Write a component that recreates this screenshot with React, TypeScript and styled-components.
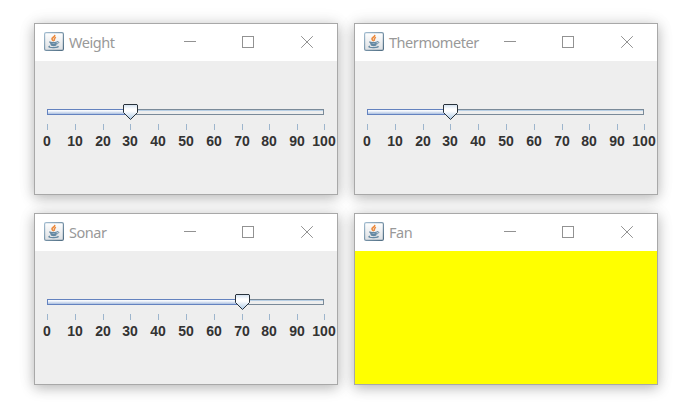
import React from "react";
import styled, { createGlobalStyle } from "styled-components";

const GlobalStyle = createGlobalStyle`
  * { box-sizing: border-box; }
  body { margin: 0; background: #fff; overflow: hidden; }
`;

const Desktop = styled.main`
  width: 690px;
  height: 416px;
  padding: 23px 0 0 34px;
  display: grid;
  grid-template-columns: 304px 304px;
  grid-template-rows: 172px 172px;
  gap: 18px 16px;
`;

const Frame = styled.section`
  display: flex;
  flex-direction: column;
  border: 1px solid #a8a8a8;
  background: #eee;
  box-shadow: 0 3px 12px rgba(0, 0, 0, 0.25), 0 0 18px rgba(0, 0, 0, 0.07);
`;

const TitleBar = styled.header`
  height: 37px;
  flex: none;
  display: flex;
  align-items: flex-start;
  padding: 8px 0 0 9px;
  background: #fff;
`;

const Title = styled.h1<{ $spacing: number }>`
  width: 120px;
  margin: 0;
  padding-left: 5px;
  font: 400 14.5px/20px "Noto Sans", "Open Sans", sans-serif;
  letter-spacing: ${(p) => p.$spacing}px;
  color: #999;
  white-space: nowrap;
`;

const Controls = styled.svg`
  width: 130px;
  height: 20px;
  flex: none;
`;

const Content = styled.div<{ $color: string }>`
  flex: 1;
  padding: 43px 0 0 12px;
  background: ${(p) => p.$color};
`;

const Track = styled.svg`
  display: block;
  width: 278px;
  height: 16px;
`;

const Scale = styled.div`
  display: grid;
  grid-template-columns: 28px 28px 27px 28px 28px 28px 28px 27px 28px 27px 1px;
  margin-top: 4px;
`;

const Mark = styled.div`
  width: 1px;
  display: flex;
  flex-direction: column;
  align-items: center;
`;

const Tick = styled.i`
  width: 1px;
  height: 6px;
  background: #9db5cd;
`;

const Label = styled.span`
  margin-top: 3px;
  margin-right: 1px;
  font: bold 14px/16px "Liberation Sans", Arial, sans-serif;
  color: #333;
`;

const IconSvg = styled.svg`
  width: 20px;
  height: 19px;
  flex: none;
`;

function JavaIcon() {
  return (
    <IconSvg viewBox="0 0 20 19">
      <defs>
        <linearGradient id="cupBg" x1="0" y1="0" x2="0" y2="1">
          <stop offset="0" stopColor="#fff" />
          <stop offset="1" stopColor="#dcdfe2" />
        </linearGradient>
        <linearGradient id="cupEdge" x1="0" y1="0" x2="1" y2="1">
          <stop offset="0" stopColor="#a3bdd0" />
          <stop offset="1" stopColor="#4f6d83" />
        </linearGradient>
      </defs>
      <rect x=".6" y=".6" width="18.8" height="17.8" rx="1.5" fill="url(#cupBg)" stroke="url(#cupEdge)" strokeWidth="1.2" />
      <g fill="none" strokeLinecap="round">
        <path d="M10.7 3.6C10.8 5 7.9 5.6 8 7C8.1 7.7 8.8 8 9.2 8.6" stroke="#ec8c40" strokeWidth="1.7" />
        <path d="M11.4 5.6C10 6.4 10.5 7.2 10.3 8.2" stroke="#ec8c40" strokeWidth="1.5" />
        <path d="M5.8 9.9C5.5 10.7 10.5 10.8 13 10" stroke="#6488a2" strokeWidth="1.3" />
        <path d="M13.4 9.6C15.8 9.4 15 11.6 12.9 11.9" stroke="#6488a2" strokeWidth="1" />
        <path d="M6.8 11.7C8.5 12.3 10.5 12.3 12.2 11.7M7.6 13C9 13.5 10.5 13.5 11.6 13" stroke="#6488a2" strokeWidth="1.6" />
        <path d="M5.4 14.2C3.8 15 6.2 15.7 9.8 15.6C13 15.5 14.8 15 14 14.4" stroke="#6488a2" strokeWidth="1.2" />
      </g>
    </IconSvg>
  );
}

function WindowControls() {
  return (
    <Controls viewBox="0 0 130 20" fill="none" stroke="#929292">
      <path d="M0 9.5H12" />
      <rect x="58.5" y="4.5" width="11" height="11" />
      <path d="M117.2 4.2L128.8 15.8M128.8 4.2L117.2 15.8" />
    </Controls>
  );
}

const tickOffsets = [0, 28, 56, 83, 111, 139, 167, 195, 222, 250, 277];

function Slider({ value }: { value: number }) {
  const x = tickOffsets[value / 10];
  return (
    <>
      <Track viewBox="0 0 278 16">
        <defs>
          <linearGradient id="fill" x1="0" y1="0" x2="0" y2="1">
            <stop offset="0" stopColor="#fff" />
            <stop offset=".3" stopColor="#f4f7fc" />
            <stop offset="1" stopColor="#9fb6dc" />
          </linearGradient>
          <linearGradient id="thumb" x1="0" y1="0" x2="0" y2="1">
            <stop offset="0" stopColor="#cfdff0" />
            <stop offset=".3" stopColor="#fff" />
            <stop offset=".45" stopColor="#fff" />
            <stop offset="1" stopColor="#a9c8e6" />
          </linearGradient>
        </defs>
        <rect x=".5" y="5.5" width="276" height="5" fill="#eee" stroke="#7a8a99" />
        <path d="M1 6.5H276" stroke="#b8cfe5" />
        <rect x=".5" y="5.5" width={x} height="5" fill="url(#fill)" stroke="#6382bf" />
        <path
          d={`M${x - 6} .5H${x + 7}L${x + 7.5} 1V8.5L${x + 0.5} 15.5L${x - 6.5} 8.5V1Z`}
          fill="url(#thumb)"
          stroke="#29323b"
        />
      </Track>
      <Scale>
        {tickOffsets.map((_, i) => (
          <Mark key={i}>
            <Tick />
            <Label>{i * 10}</Label>
          </Mark>
        ))}
      </Scale>
    </>
  );
}

interface WindowProps {
  title: string;
  spacing: number;
  value?: number;
}

function AppWindow({ title, spacing, value }: WindowProps) {
  return (
    <Frame>
      <TitleBar>
        <JavaIcon />
        <Title $spacing={spacing}>{title}</Title>
        <WindowControls />
      </TitleBar>
      <Content $color={value === undefined ? "#ff0" : "#eee"}>
        {value !== undefined && <Slider value={value} />}
      </Content>
    </Frame>
  );
}

export default function App() {
  return (
    <>
      <GlobalStyle />
      <Desktop>
        <AppWindow title="Weight" spacing={-0.45} value={30} />
        <AppWindow title="Thermometer" spacing={-0.45} value={30} />
        <AppWindow title="Sonar" spacing={-0.45} value={70} />
        <AppWindow title="Fan" spacing={-0.45} />
      </Desktop>
    </>
  );
}
